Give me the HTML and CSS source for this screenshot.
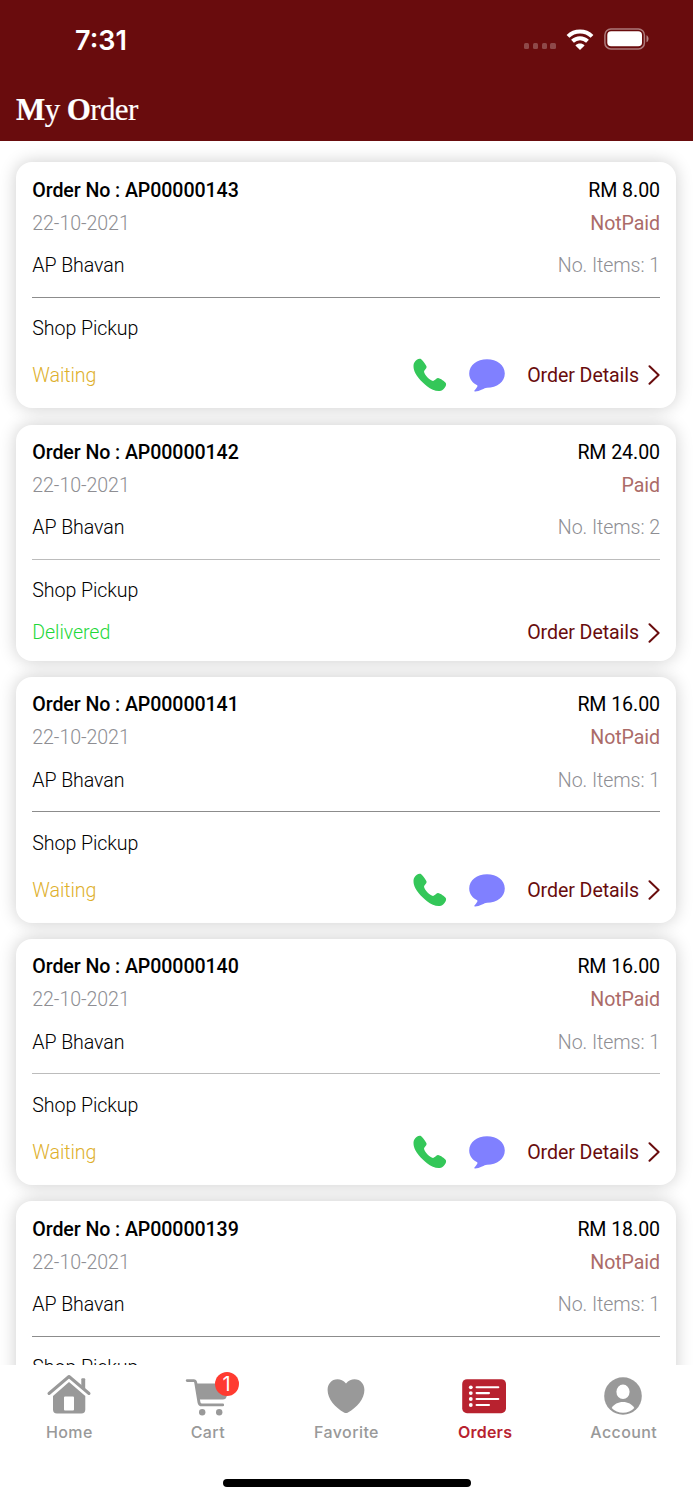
FILE: index.html
```html
<!DOCTYPE html>
<html lang="en">
<head>
<meta charset="utf-8">
<title>My Order</title>
<link rel="stylesheet" href="styles.css">
</head>
<body>
<svg class="defs" aria-hidden="true">
  <symbol id="phone" viewBox="0 0 34 34"><path d="M1.2 4.8C3 1.8 5.500.3 7.500.8C9 1.300 13 7 13.600 8.700C14 10.400 11 12 11 13.800C11.500 17 17 22.600 20 22.900C21.800 23 23.200 19.900 25 20.100C27 20.300 32.500 23.900 33 25.500C33.600 28 31 31.500 28 32.700C24 34 18.500 31.500 14 28.200C8 23.500 2 17 .8 11C.4 8.500.3 6.300 1.200 4.800Z"/></symbol>
  <symbol id="chat" viewBox="0 0 36 33"><path d="M18 .3C27.900.3 35.800 6.300 35.800 14.500C35.800 23 27.900 28.700 18 28.700C16.500 28.700 15 29.700 13 30.500C10.500 31.700 7.500 32.700 5.900 32.500C4.700 32.200 5.500 31.300 6.700 30C8 28.500 9 27 8.200 26.300C3.500 24 .2 20 .2 14.500C.2 6.300 8.100.3 18 .3Z"/></symbol>
  <symbol id="chevron" viewBox="0 0 12 20"><path d="M1.500 1.300L10.600 10L1.500 18.700" fill="none" stroke="currentColor" stroke-width="2" stroke-linecap="round" stroke-linejoin="round"/></symbol>
</svg>
<div class="screen">
  <header class="header">
    <div class="status">
      <span class="time">7:31</span>
      <div class="indicators">
        <span class="dots"><i></i><i></i><i></i><i></i></span>
        <svg class="wifi" viewBox="0 0 28 21"><g fill="none" stroke="#fff" stroke-width="4"><path d="M2 7.300C8.600.8 19.400.8 26 7.300"/><path d="M6.500 12.300C10.800 8.200 17.200 8.200 21.500 12.300"/></g><path d="M9.400 16.400C12 14 16 14 18.600 16.400L14 21Z" fill="#fff"/></svg>
        <svg class="battery" viewBox="0 0 45 22"><rect x=".9" y=".9" width="39.500" height="20" rx="6" fill="none" stroke="#fff" stroke-opacity=".45" stroke-width="1.500"/><rect x="3.300" y="3.300" width="34.700" height="15" rx="3.800" fill="#fff"/><path d="M42.500 7.300C45.200 8.300 45.200 13.300 42.500 14.300Z" fill="#fff" opacity=".5"/></svg>
      </div>
    </div>
    <h1 class="title"><b>M</b>y <b>O</b>rder</h1>
  </header>
  <main class="orders">
    <article class="card">
      <div class="row"><b class="number">Order No : AP00000143</b><span class="price">RM 8.00</span></div>
      <div class="row"><span class="date">22-10-2021</span><span class="payment">NotPaid</span></div>
      <div class="row shop"><span>AP Bhavan</span><span class="items">No. Items: 1</span></div>
      <div class="row pickup">Shop Pickup</div>
      <div class="row foot"><span class="waiting">Waiting</span><div class="actions"><svg class="phone"><use href="#phone"/></svg><svg class="chat"><use href="#chat"/></svg><a class="details">Order Details</a><svg class="chevron"><use href="#chevron"/></svg></div></div>
    </article>
    <article class="card">
      <div class="row"><b class="number">Order No : AP00000142</b><span class="price">RM 24.00</span></div>
      <div class="row"><span class="date">22-10-2021</span><span class="payment">Paid</span></div>
      <div class="row shop pale"><span>AP Bhavan</span><span class="items">No. Items: 2</span></div>
      <div class="row pickup">Shop Pickup</div>
      <div class="row foot short"><span class="delivered">Delivered</span><div class="actions"><a class="details">Order Details</a><svg class="chevron"><use href="#chevron"/></svg></div></div>
    </article>
    <article class="card">
      <div class="row"><b class="number">Order No : AP00000141</b><span class="price">RM 16.00</span></div>
      <div class="row"><span class="date">22-10-2021</span><span class="payment">NotPaid</span></div>
      <div class="row shop"><span>AP Bhavan</span><span class="items">No. Items: 1</span></div>
      <div class="row pickup">Shop Pickup</div>
      <div class="row foot"><span class="waiting">Waiting</span><div class="actions"><svg class="phone"><use href="#phone"/></svg><svg class="chat"><use href="#chat"/></svg><a class="details">Order Details</a><svg class="chevron"><use href="#chevron"/></svg></div></div>
    </article>
    <article class="card">
      <div class="row"><b class="number">Order No : AP00000140</b><span class="price">RM 16.00</span></div>
      <div class="row"><span class="date">22-10-2021</span><span class="payment">NotPaid</span></div>
      <div class="row shop pale"><span>AP Bhavan</span><span class="items">No. Items: 1</span></div>
      <div class="row pickup">Shop Pickup</div>
      <div class="row foot"><span class="waiting">Waiting</span><div class="actions"><svg class="phone"><use href="#phone"/></svg><svg class="chat"><use href="#chat"/></svg><a class="details">Order Details</a><svg class="chevron"><use href="#chevron"/></svg></div></div>
    </article>
    <article class="card">
      <div class="row"><b class="number">Order No : AP00000139</b><span class="price">RM 18.00</span></div>
      <div class="row"><span class="date">22-10-2021</span><span class="payment">NotPaid</span></div>
      <div class="row shop"><span>AP Bhavan</span><span class="items">No. Items: 1</span></div>
      <div class="row pickup">Shop Pickup</div>
    </article>
  </main>
  <nav class="tabs">
    <a class="tab"><svg viewBox="0 0 46 42"><path d="M3 20.500L23 3.500L43 20.500" fill="none" stroke="currentColor" stroke-width="3" stroke-linecap="round" stroke-linejoin="round"/><path d="M35.300 6.200Q35.300 5.200 36.300 5.200H38.200Q39.200 5.200 39.200 6.200V16L35.300 12.500Z" fill="currentColor"/><path fill-rule="evenodd" d="M23 9L39.300 23V36.500Q39.300 40.500 35.300 40.500H11Q7 40.500 7 36.500V23ZM19 23.500Q18 23.500 18 24.500V36.500Q18 37.500 19 37.500H27Q28 37.500 28 36.500V24.500Q28 23.500 27 23.500Z" fill="currentColor"/></svg><span>Home</span></a>
    <a class="tab"><svg viewBox="0 0 46 42"><path d="M3.200 7.600H9.700Q11.300 7.600 11.700 9.500L15 29.500Q15.400 31.900 18 31.900H38.700" fill="none" stroke="currentColor" stroke-width="2.900" stroke-linecap="round"/><path d="M12 10.600H46L42.500 24Q41.700 26.500 39 26.500H14.800Z" fill="currentColor"/><circle cx="18.200" cy="39.300" r="3.200" fill="currentColor"/><circle cx="35.200" cy="39.300" r="3.200" fill="currentColor"/></svg><em class="badge">1</em><span>Cart</span></a>
    <a class="tab"><svg viewBox="0 0 46 42"><path d="M23 10.500C25.500 7.500 28.500 6.200 31.500 6.200C37.500 6.200 41.400 11 41.400 17C41.400 26 34 34.500 25 39.400Q23 40.500 21 39.400C12 34.500 4.600 26 4.600 17C4.600 11 8.500 6.200 14.500 6.200C17.500 6.200 20.500 7.500 23 10.500Z" fill="currentColor"/></svg><span>Favorite</span></a>
    <a class="tab active"><svg viewBox="0 0 46 42"><rect x="1.200" y="6.200" width="43.800" height="34" rx="4.800" fill="currentColor"/><g fill="#fff"><circle cx="9.800" cy="14.300" r="1.900"/><circle cx="9.800" cy="20.100" r="1.900"/><circle cx="9.800" cy="26" r="1.900"/><circle cx="9.800" cy="32" r="1.900"/></g><path d="M15.600 14.300H37.300M15.600 20.100H28M15.600 26H37.300M15.600 32H28" stroke="#fff" stroke-width="2.100" stroke-linecap="round"/></svg><span>Orders</span></a>
    <a class="tab"><svg viewBox="0 0 46 42"><circle cx="23" cy="23" r="18.800" fill="currentColor"/><ellipse cx="23" cy="18.800" rx="6.600" ry="7.200" fill="#fff"/><path d="M11.700 35C14 31.300 18 29.100 23 29.100C28 29.100 32 31.300 34.300 35C31.500 38 27.500 39.700 23 39.700C18.500 39.700 14.500 38 11.700 35Z" fill="#fff"/></svg><span>Account</span></a>
  </nav>
  <div class="home-area"><div class="home-indicator"></div></div>
</div>
</body>
</html>
```

FILE: styles.css
```css
* { box-sizing: border-box; }
body { margin: 0; background: #fff; font-family: Roboto, sans-serif; color: #000; }
.defs { display: none; }
.screen { width: 693px; height: 1500px; display: flex; flex-direction: column; overflow: hidden; }
.header { height: 141px; flex: none; background: #690c0d; color: #fff; }
.status { height: 78px; padding: 0 44px 0 75px; display: flex; justify-content: space-between; align-items: center; }
.time { font: 600 27px/32px Inter, sans-serif; letter-spacing: 0; padding-top: 3px; }
.indicators { display: flex; align-items: center; }
.dots { display: flex; gap: 3.500px; padding-top: 14px; margin-right: 10.500px; }
.dots i { width: 5.200px; height: 5.200px; border-radius: 1.500px; background: #fff; opacity: .25; }
.wifi { width: 28px; height: 21px; margin-right: 10px; }
.battery { width: 45px; height: 22px; }
.title { margin: 0; padding: 14px 0 0 16px; font: 400 31px/36px "Liberation Serif", serif; letter-spacing: -.6px; -webkit-text-stroke: .2px #fff; }
.title b { font-weight: 700; }
.orders { height: 1224px; flex: none; overflow: hidden; padding: 21.400px 17px 0 16.300px; display: flex; flex-direction: column; gap: 16.500px; }
.card { flex: none; padding: 11.200px 16px 5.700px; border-radius: 16px; background: #fff; box-shadow: 0 0 17px rgba(0, 0, 0, .2); }
.row { height: 33px; display: flex; align-items: center; justify-content: space-between; font-size: 19.600px; font-weight: 300; letter-spacing: -.08px; white-space: nowrap; }
.number { font-weight: 500; }
.price { font-weight: 400; }
.date, .items { color: #8e8e93; }
.payment { font-weight: 400; color: #ab6b68; }
.shop { height: 58px; padding-bottom: 5px; border-bottom: 1.300px solid #8c8c8c; }
.pale { border-color: #bcbcbc; }
.pickup { height: 40px; margin-top: 10.800px; }
.foot { height: 54px; }
.short { height: 44.300px; }
.waiting { color: #deb02c; }
.delivered { color: #1fd83a; }
.actions { display: flex; align-items: center; }
.phone { width: 34px; height: 34px; fill: #34c759; margin-right: 21.500px; }
.chat { width: 36px; height: 33px; fill: #8080ff; margin-right: 22.500px; }
.details { font-weight: 400; color: #690c0d; }
.chevron { width: 12px; height: 20px; color: #690c0d; margin-left: 9px; }
.tabs { height: 85px; flex: none; display: grid; grid-template-columns: repeat(5, 1fr); background: #fff; }
.tab { position: relative; display: flex; flex-direction: column; align-items: center; padding-top: 8px; color: #999; font: 500 16px/20px Inter, sans-serif; letter-spacing: .4px; }
.tab svg { width: 46px; height: 42px; flex: none; overflow: visible; margin: 0 1.500px 7.300px 0; }
.active { color: #b8222f; font-weight: 600; letter-spacing: .2px; }
.badge { position: absolute; left: 76px; top: 7px; width: 24px; height: 24px; border-radius: 50%; background: #ff3b30; color: #fff; font: 400 20px/24px Inter, sans-serif; text-align: center; letter-spacing: 0; }
.home-area { height: 50px; display: flex; justify-content: center; padding-top: 28.500px; }
.home-indicator { width: 248px; height: 8.500px; border-radius: 5px; background: #000; }
```
